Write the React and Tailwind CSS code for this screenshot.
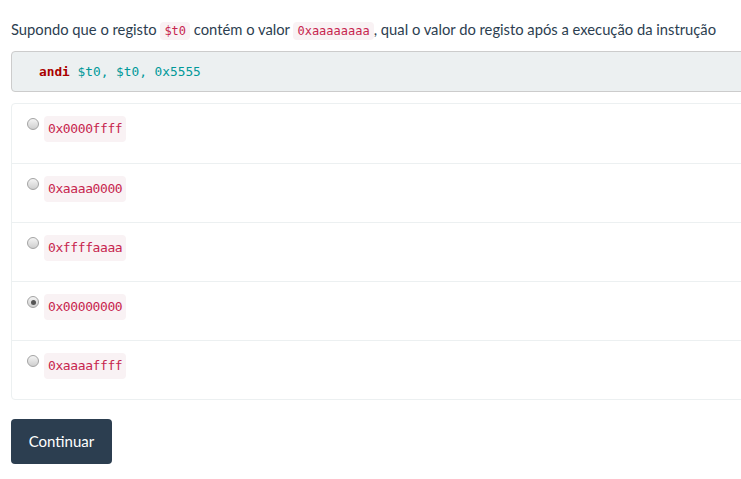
import React from 'react';

const options = ['0x0000ffff', '0xaaaa0000', '0xffffaaaa', '0x00000000', '0xaaaaffff'];

const mono = "font-['DejaVu_Sans_Mono',monospace]";

const Chip = ({ children, large = false }) => (
  <code
    className={`${mono} px-[4px] rounded-[4px] bg-[#f9f2f4] text-[#c7254e] ${
      large ? 'text-[13px] tracking-[-0.4px] py-[3px]' : 'text-[12px] py-[2px]'
    }`}
  >
    {children}
  </code>
);

// Old-style grey gradient radio
const Radio = ({ checked }) => (
  <span className="mt-[2px] mr-[5px] w-[12px] h-[12px] shrink-0 rounded-full border border-[#a3a3a3] bg-gradient-to-b from-[#f4f4f4] to-[#cfcfcf] flex items-center justify-center">
    {checked && <span className="w-[5px] h-[5px] rounded-full bg-[#555]" />}
  </span>
);

export default function App() {
  const [selected, setSelected] = React.useState(3);

  return (
    <div className="w-[741px] h-[479px] overflow-hidden bg-white font-['Lato',sans-serif] text-[14.75px] text-[#2c3e50]">
      <div className="pl-[11px] pt-[19px] w-[790px]">
        {/* Question */}
        <p className="leading-[21px] whitespace-nowrap">
          Supondo que o registo <Chip>$t0</Chip> contém o valor <Chip>0xaaaaaaaa</Chip>, qual o valor do registo após a execução da instrução
        </p>

        {/* Instruction */}
        <pre className={`${mono} mt-[9px] h-[41px] flex items-center pl-[27px] text-[12.8px] bg-[#ecf0f1] border border-[#cccccc] rounded-[4px]`}>
          <span className="font-bold text-[#aa0000]">andi</span>
          <span className="text-[#009999]"> $t0, $t0, 0x5555</span>
        </pre>

        {/* Options */}
        <div className="mt-[11px] border border-[#ecf0f1] rounded-[4px]">
          {options.map((opt, i) => (
            <label
              key={opt}
              onClick={() => setSelected(i)}
              className={`flex items-start h-[59px] pl-[15px] pt-[12px] cursor-pointer ${i > 0 ? 'border-t border-[#ecf0f1]' : ''}`}
            >
              <Radio checked={selected === i} />
              <Chip large>{opt}</Chip>
            </label>
          ))}
        </div>

        {/* Submit */}
        <button className="mt-[19px] w-[101px] h-[45px] rounded-[4px] bg-[#2c3e50] text-white text-[15px]">
          Continuar
        </button>
      </div>
    </div>
  );
}
